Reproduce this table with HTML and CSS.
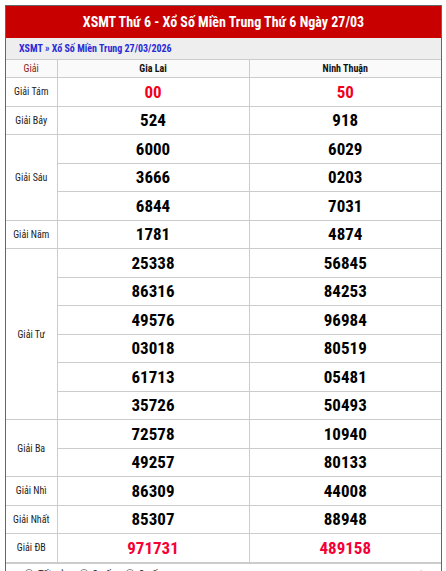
FILE: index.html
```html
<!DOCTYPE html>
<html lang="vi">
<head>
<meta charset="utf-8">
<title>XSMT Thứ 6</title>
<link rel="stylesheet" href="styles.css">
</head>
<body>
<div class="box">
  <div class="title">XSMT Thứ 6 - Xổ Số Miền Trung Thứ 6 Ngày 27/03</div>
  <div class="crumb"><a href="#">XSMT</a> » <a href="#">Xổ Số Miền Trung 27/03/2026</a></div>
  <table class="kq">
    <colgroup><col class="c1"><col class="c2"><col class="c3"></colgroup>
    <thead>
      <tr class="head"><th class="lbl-h">Giải</th><th>Gia Lai</th><th>Ninh Thuận</th></tr>
    </thead>
    <tbody>
      <tr><td class="lbl">Giải Tám</td><td class="num red">00</td><td class="num red">50</td></tr>
      <tr><td class="lbl">Giải Bảy</td><td class="num">524</td><td class="num">918</td></tr>
      <tr><td class="lbl" rowspan="3">Giải Sáu</td><td class="num">6000</td><td class="num">6029</td></tr>
      <tr><td class="num">3666</td><td class="num">0203</td></tr>
      <tr><td class="num">6844</td><td class="num">7031</td></tr>
      <tr><td class="lbl">Giải Năm</td><td class="num">1781</td><td class="num">4874</td></tr>
      <tr><td class="lbl" rowspan="6">Giải Tư</td><td class="num">25338</td><td class="num">56845</td></tr>
      <tr><td class="num">86316</td><td class="num">84253</td></tr>
      <tr><td class="num">49576</td><td class="num">96984</td></tr>
      <tr><td class="num">03018</td><td class="num">80519</td></tr>
      <tr><td class="num">61713</td><td class="num">05481</td></tr>
      <tr><td class="num">35726</td><td class="num">50493</td></tr>
      <tr><td class="lbl" rowspan="2">Giải Ba</td><td class="num">72578</td><td class="num">10940</td></tr>
      <tr><td class="num">49257</td><td class="num">80133</td></tr>
      <tr><td class="lbl">Giải Nhì</td><td class="num">86309</td><td class="num">44008</td></tr>
      <tr><td class="lbl">Giải Nhất</td><td class="num">85307</td><td class="num">88948</td></tr>
      <tr><td class="lbl">Giải ĐB</td><td class="num db">971731</td><td class="num db">489158</td></tr>
    </tbody>
  </table>
  <div class="opts">
    <label class="opt"><span class="radio"></span>Tất cả</label>
    <label class="opt"><span class="radio"></span>2 số</label>
    <label class="opt"><span class="radio"></span>3 số</label>
    <span class="spacer"></span>
    <span class="mark">✱</span>
  </div>
</div>
</body>
</html>
```

FILE: styles.css
```css
html, body {
  margin: 0;
  padding: 0;
  background: #fff;
}
body {
  padding: 5px 4px 0 5px;
  font-family: "Liberation Sans Narrow", "Roboto Condensed", "Arial Narrow", Roboto, sans-serif;
  color: #222;
}
.box {
  border: 1px solid #666;
  border-bottom: none;
  background: #fff;
}
.title {
  background: #c80000;
  color: #fff;
  font-weight: bold;
  font-size: 14px;
  height: 32px;
  line-height: 32px;
  text-align: center;
}
.crumb {
  background: #eee;
  height: 21px;
  line-height: 21px;
  padding-left: 13px;
  font-size: 10px;
  font-weight: bold;
  color: #2b2bd6;
  border-bottom: 1px solid #ccc;
}
.crumb a {
  color: #2b2bd6;
  text-decoration: none;
}
.kq {
  width: 100%;
  border-collapse: collapse;
  table-layout: fixed;
}
.c1 { width: 51px; }
.kq th, .kq td {
  border: 1px solid #ccc;
  padding: 0;
  text-align: center;
  vertical-align: middle;
}
.kq tr > :first-child { border-left: none; }
.kq tr > :last-child { border-right: none; }
.kq thead th { border-top: none; }
.head th {
  background: #fafafa;
  height: 17px;
  font-size: 10px;
  font-weight: bold;
  color: #111;
}
.head .lbl-h {
  color: #8b1a1a;
  font-weight: normal;
}
.kq td {
  height: 27.5px;
}
.lbl {
  font-size: 10px;
  color: #222;
}
.num {
  font-size: 17px;
  font-weight: bold;
  color: #000;
}
.num.red { color: #f2001c; }
.num.db { color: #f50036; }
.opts {
  display: flex;
  align-items: center;
  gap: 14px;
  padding: 4px 16px 4px 18px;
  font-size: 11px;
  color: #222;
  border-top: 1px solid #ccc;
}
.opt {
  display: flex;
  align-items: center;
  gap: 4px;
}
.radio {
  width: 8px;
  height: 8px;
  border: 1px solid #888;
  border-radius: 50%;
}
.spacer { flex: 1; }
.mark {
  color: #e00;
  font-size: 10px;
}
```
